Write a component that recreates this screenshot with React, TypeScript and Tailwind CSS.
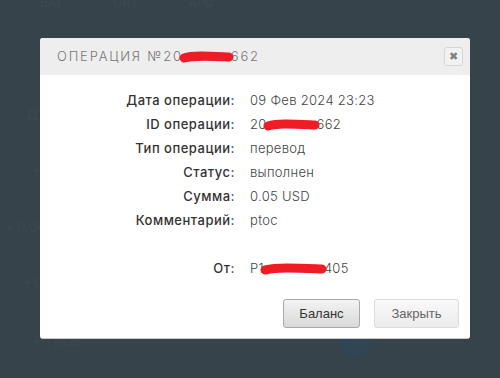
const rows: [string, string][] = [
  ["Дата операции:", "09 Фев 2024 23:23"],
  ["ID операции:", "id"],
  ["Тип операции:", "перевод"],
  ["Статус:", "выполнен"],
  ["Сумма:", "0.05 USD"],
  ["Комментарий:", "ptoc"],
];

function Scribble({ w }: { w: number }) {
  return (
    <svg width={w + 8} height="16" viewBox={`0 0 ${w + 8} 16`} className="absolute -left-[4px] top-[2px]">
      <path d={`M5 8 C ${w * 0.3} 5, ${w * 0.6} 6, ${w + 2} 7`} stroke="#ee1c24" strokeWidth="9" strokeLinecap="round" fill="none" />
    </svg>
  );
}

function Masked({ pre, post, w }: { pre: string; post: string; w: number }) {
  return (
    <span className="inline-flex items-center">
      {pre}
      <span className="relative inline-block h-[18px]" style={{ width: w }}>
        <Scribble w={w} />
      </span>
      {post}
    </span>
  );
}

export default function App() {
  return (
    <div className="relative h-[378px] w-[500px] overflow-hidden bg-[#37434b] font-['Inter',sans-serif]">
      {/* faded page behind the modal */}
      <div className="absolute left-[40px] top-[-3px] flex gap-[50px] text-[12px] font-semibold leading-none text-[#3c4850]">
        <span>BAL</span>
        <span>GRT</span>
        <span>APC</span>
      </div>
      <div className="absolute left-[26px] top-[104px] text-[15px] text-[#3c4850]">Д</div>
      <div className="absolute left-[33px] top-[160px] text-[13px] text-[#3c4850]">+</div>
      <div className="absolute left-[5px] top-[218px] text-[13px] text-[#3c4850]">+ 0.06</div>
      <div className="absolute left-[22px] top-[273px] text-[13px] text-[#3c4850]">+ 0</div>
      <div className="absolute left-[33px] top-[332px] text-[13px] text-[#3c4850]">+ 1 RUB</div>
      <div className="absolute left-[339px] top-[325px] h-[32px] w-[32px] rounded-full bg-[#2f4655]" />

      <div className="relative ml-[40px] mt-[38px] w-[430px] overflow-hidden rounded-[3px] border-b border-[#c8c8c8] bg-white">
        <div className="flex h-[37px] items-center justify-between bg-[#eeeeee] pl-[17px] pr-[7px]">
          <div className="text-[13px] font-light tracking-[1.8px] text-[#777]">
            <Masked pre="ОПЕРАЦИЯ №20" post="662" w={48} />
          </div>
          <div className="flex h-[19px] w-[19px] items-center justify-center rounded-[3px] border border-[#d6d6d6] bg-[#f2f2f2] text-[11px] leading-none text-[#808080]">
            ✖
          </div>
        </div>

        <div className="px-[15px] pt-[14px] pb-[10px]">
          <div className="grid grid-cols-[180px_1fr] gap-x-[15px] text-[13px]">
            {rows.map(([label, value]) => (
              <div key={label} className="contents">
                <div className="flex h-[24px] items-center justify-end font-medium tracking-[0.5px] text-[#333]">{label}</div>
                <div className="flex h-[24px] items-center font-light tracking-[0.3px] text-[#444]">
                  {value === "id" ? <Masked pre="20" post="662" w={50} /> : value}
                </div>
              </div>
            ))}
            <div className="h-[24px]" />
            <div className="h-[24px]" />
            <div className="flex h-[24px] items-center justify-end font-medium tracking-[0.5px] text-[#333]">От:</div>
            <div className="flex h-[24px] items-center font-light tracking-[0.3px] text-[#444]">
              <Masked pre="P1" post="405" w={60} />
            </div>
          </div>

          <div className="mt-[18px] flex justify-end gap-[14px] font-['Liberation_Sans',sans-serif] text-[13px]">
            <button className="h-[29px] w-[77px] rounded-[3px] border border-[#a9a9a9] bg-gradient-to-b from-[#f3f3f3] to-[#d9d9d9] text-[#333]">
              Баланс
            </button>
            <button className="-mr-[4px] h-[29px] w-[85px] rounded-[3px] border border-[#dcdcdc] bg-gradient-to-b from-[#f8f8f8] to-[#ececec] text-[#666]">
              Закрыть
            </button>
          </div>
        </div>
      </div>
    </div>
  );
}
